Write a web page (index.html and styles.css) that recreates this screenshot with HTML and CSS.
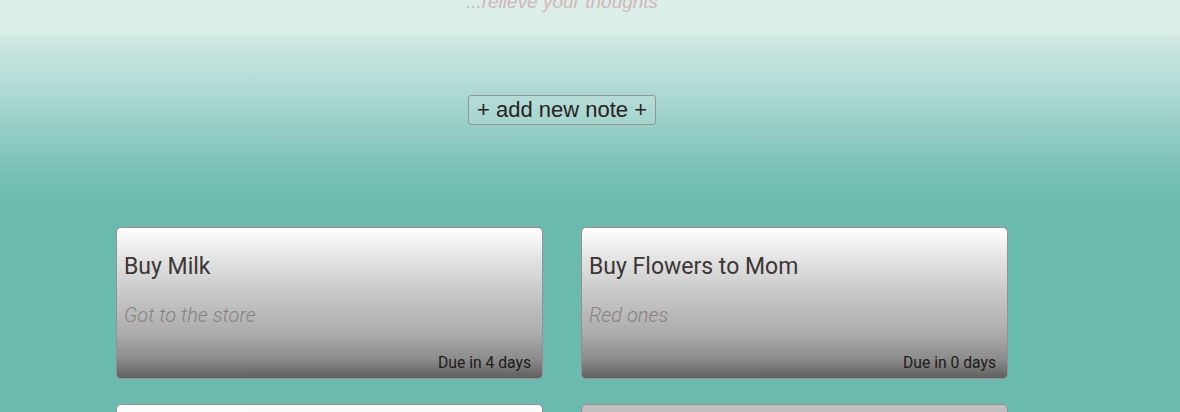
FILE: index.html
```html
<!DOCTYPE html>
<html>
<head>
<meta charset="utf-8">
<link rel="stylesheet" href="styles.css">
</head>
<body>
<header class="top">
  <div class="wrap">
    <p class="tagline">...relieve your thoughts</p>
  </div>
</header>
<main class="wrap">
  <div class="actions">
    <button class="add-btn">+ add new note +</button>
  </div>
  <section class="notes">
    <article class="note">
      <h2 class="note-title">Buy Milk</h2>
      <p class="note-desc">Got to the store</p>
      <p class="note-due">Due in 4 days</p>
    </article>
    <article class="note">
      <h2 class="note-title">Buy Flowers to Mom</h2>
      <p class="note-desc">Red ones</p>
      <p class="note-due">Due in 0 days</p>
    </article>
    <article class="note">
      <h2 class="note-title">&nbsp;</h2>
      <p class="note-desc">&nbsp;</p>
      <p class="note-due">&nbsp;</p>
    </article>
    <article class="note note-grey">
      <h2 class="note-title">&nbsp;</h2>
      <p class="note-desc">&nbsp;</p>
      <p class="note-due">&nbsp;</p>
    </article>
  </section>
</main>
</body>
</html>
```

FILE: styles.css
```css
html, body {
  margin: 0;
  padding: 0;
}
body {
  height: 412px;
  overflow: hidden;
  font-family: Roboto, "Liberation Sans", sans-serif;
  background: #6abab0 linear-gradient(to bottom, #dceeea 0px, #dceeea 33px, #d3e9e4 34px, #b5ddd7 80px, #94cdc5 130px, #78c0b6 175px, #6abab0 210px) no-repeat;
  background-size: 100% 412px;
}
.wrap {
  margin-left: 116px;
  width: 892px;
}
.top {
  height: 34px;
  overflow: hidden;
}
.tagline {
  margin: -10px 0 0 0;
  text-align: center;
  font-family: "Liberation Sans", Arial, sans-serif;
  font-style: italic;
  font-size: 19px;
  line-height: 24px;
  color: #d3b6b6;
}
.actions {
  display: flex;
  justify-content: center;
  padding-top: 61px;
}
.add-btn {
  font-family: "Liberation Sans", Arial, sans-serif;
  font-size: 22px;
  line-height: 26px;
  color: #2a2222;
  background: rgba(255, 255, 255, 0.12);
  border: 1px solid #999494;
  border-radius: 3px;
  padding: 1px 8px 1px 8px;
  height: 30px;
  box-sizing: border-box;
}
.notes {
  display: grid;
  grid-template-columns: 427px 427px;
  column-gap: 38px;
  row-gap: 25px;
  margin-top: 102px;
}
.note {
  box-sizing: border-box;
  height: 152px;
  border: 1px solid #a08c8c;
  border-radius: 5px;
  background: linear-gradient(to bottom, #ffffff 0%, #e4e4e4 20%, #c6c6c6 45%, #acacac 70%, #8a8a8a 88%, #5f5f5f 100%);
  padding: 0 11px 0 7px;
  display: flex;
  flex-direction: column;
}
.note-grey {
  background: linear-gradient(to bottom, #bfbfbf 0%, #a9a9a9 50%, #5f5f5f 100%);
}
.note-title {
  margin: 24px 0 0 0;
  font-weight: 400;
  font-size: 23px;
  line-height: 29px;
  color: #3d3636;
}
.note-desc {
  margin: 21px 0 0 0;
  font-style: italic;
  font-weight: 300;
  font-size: 20px;
  line-height: 26px;
  color: #8a8080;
}
.note-due {
  margin: auto 0 6px 0;
  text-align: right;
  font-size: 15.7px;
  line-height: 18px;
  color: #1e1a1a;
}
```
